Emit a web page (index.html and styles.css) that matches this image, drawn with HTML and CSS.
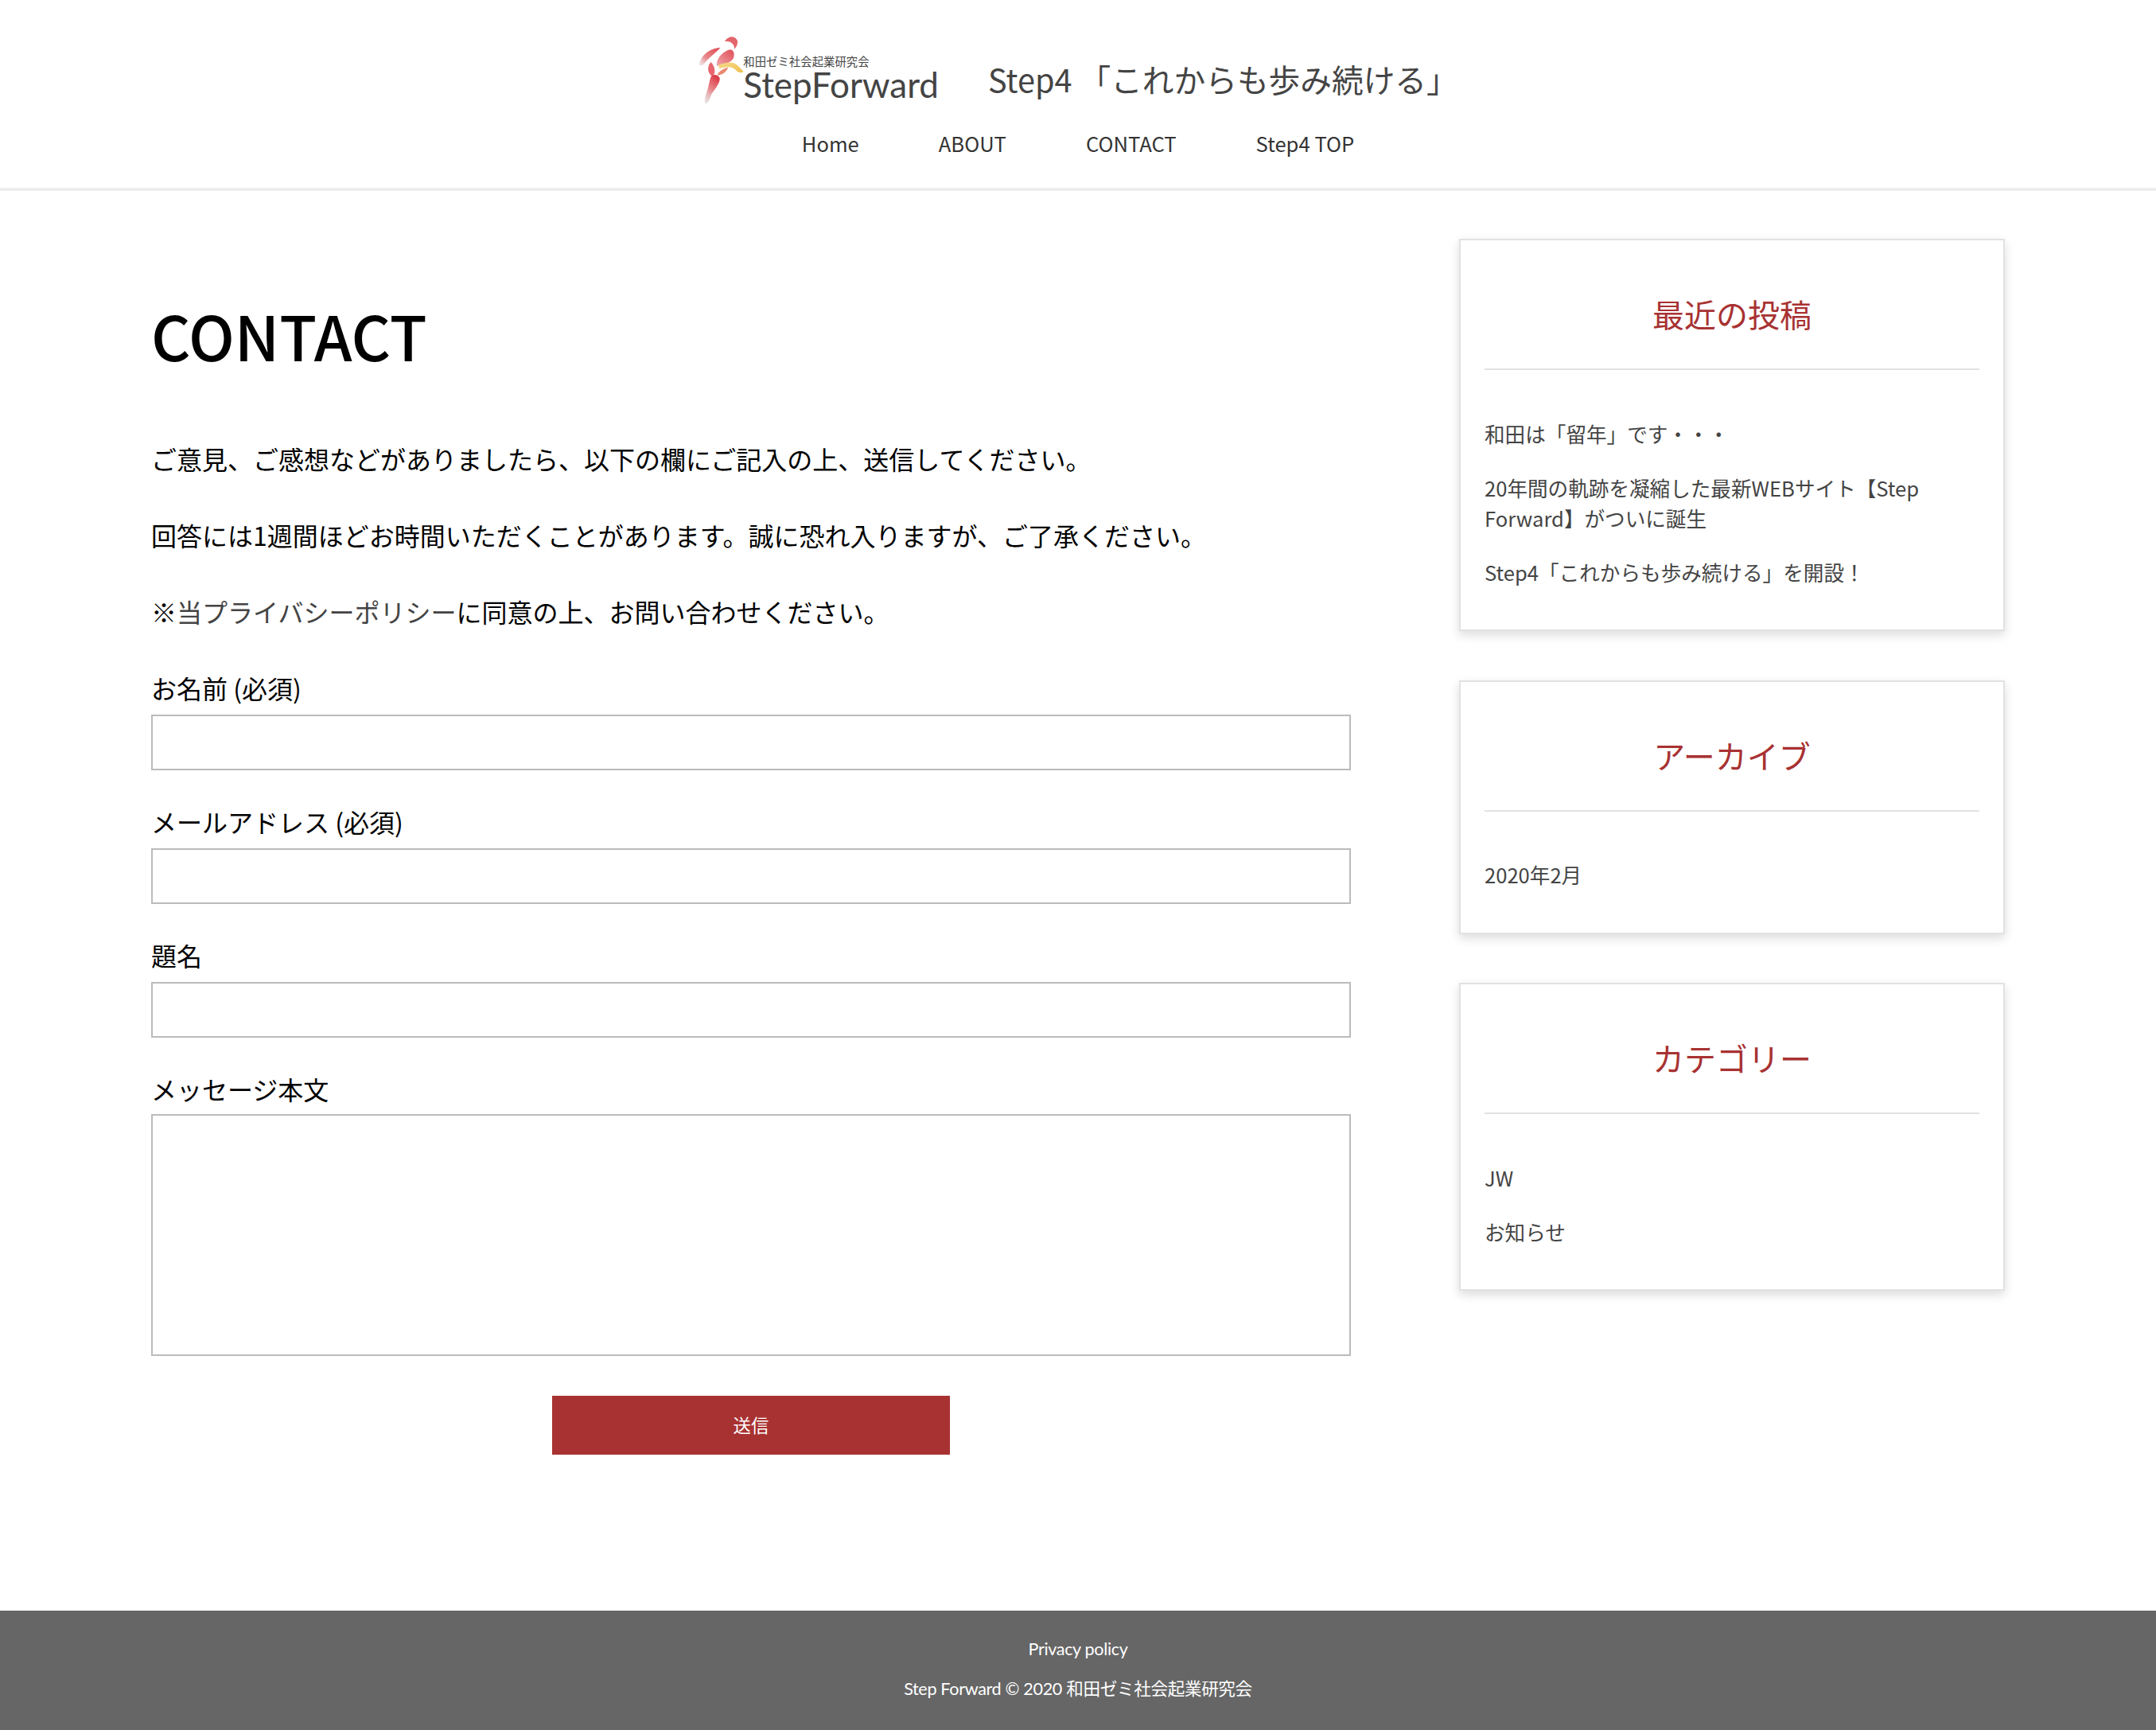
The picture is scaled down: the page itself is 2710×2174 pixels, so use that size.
FILE: index.html
```html
<!DOCTYPE html>
<html lang="ja">
<head>
<meta charset="utf-8">
<title>CONTACT | Step4</title>
<link rel="stylesheet" href="styles.css">
</head>
<body>
<header class="site-header">
  <div class="brand-row">
    <a class="logo" href="#">
      <svg class="logo-mark" viewBox="50 40 180 270" aria-hidden="true">
        <defs>
          <linearGradient id="armGrad" x1="0.9" y1="0" x2="0" y2="1"><stop offset="0" stop-color="#dc4a52"/><stop offset=".6" stop-color="#e98b8f"/><stop offset="1" stop-color="#e0d8d8" stop-opacity=".5"/></linearGradient>
          <linearGradient id="legGrad" x1="0.6" y1="0" x2="0.2" y2="1"><stop offset="0" stop-color="#dc3c46"/><stop offset=".5" stop-color="#e88a8e"/><stop offset="1" stop-color="#d8d0d0" stop-opacity=".6"/></linearGradient>
          <linearGradient id="headGrad" x1="1" y1="0" x2="0" y2="1"><stop offset="0" stop-color="#e04c56"/><stop offset="1" stop-color="#f0a8ac"/></linearGradient>
          <linearGradient id="armBand" x1="0" y1="0" x2="1" y2="1"><stop offset="0" stop-color="#f6d98a"/><stop offset="1" stop-color="#f0c050"/></linearGradient>
          <filter id="soft"><feGaussianBlur stdDeviation="1.6"/></filter>
        </defs>
        <g filter="url(#soft)">
          <path d="M152 68C160 48 190 40 200 65 202 78 195 90 188 96 190 80 175 62 152 68z" fill="#e2656c"/>
          <path d="M55 155C62 125 85 95 135 90 125 105 95 125 75 150 68 158 60 162 55 155z" fill="url(#armGrad)"/>
          <path d="M122 160C118 140 135 110 170 98 185 98 190 112 185 130 175 148 150 155 122 160z" fill="url(#headGrad)"/>
          <path d="M100 145C85 160 85 185 105 200 118 190 118 165 100 145z" fill="#e9666e"/>
          <path d="M130 155C150 148 170 142 190 150 205 160 215 172 222 180 218 190 200 184 190 172 180 162 160 160 130 170z" fill="url(#armBand)"/>
          <path d="M125 190C135 175 150 168 165 165 158 182 145 192 125 195z" fill="#e98a72"/>
          <path d="M100 200C108 190 125 190 133 205 135 225 115 245 100 270 95 285 90 300 80 302 72 298 78 275 85 255 92 235 94 215 100 200z" fill="url(#legGrad)"/>
        </g>
      </svg>
      <span class="logo-text">
        <span class="logo-sub">和田ゼミ社会起業研究会</span>
        <span class="logo-name">StepForward</span>
      </span>
    </a>
    <p class="site-title">Step4 「これからも歩み続ける」</p>
  </div>
  <nav class="main-nav">
    <a href="#">Home</a>
    <a href="#">ABOUT</a>
    <a href="#">CONTACT</a>
    <a href="#">Step4 TOP</a>
  </nav>
</header>

<main class="layout">
  <section class="content">
    <h1 class="page-title">CONTACT</h1>
    <p class="lead">ご意見、ご感想などがありましたら、以下の欄にご記入の上、送信してください。</p>
    <p class="lead">回答には1週間ほどお時間いただくことがあります。誠に恐れ入りますが、ご了承ください。</p>
    <p class="lead">※<a class="inline-link" href="#">当プライバシーポリシー</a>に同意の上、お問い合わせください。</p>
    <form class="contact-form">
      <label class="field">お名前 (必須)<input class="control" type="text"></label>
      <label class="field">メールアドレス (必須)<input class="control" type="email"></label>
      <label class="field">題名<input class="control" type="text"></label>
      <label class="field">メッセージ本文<textarea class="control control-area"></textarea></label>
      <button class="submit" type="button">送信</button>
    </form>
  </section>

  <aside class="sidebar">
    <div class="card">
      <h2 class="card-title">最近の投稿</h2>
      <ul class="card-list">
        <li><a href="#">和田は「留年」です・・・</a></li>
        <li><a href="#">20年間の軌跡を凝縮した最新WEBサイト【Step Forward】がついに誕生</a></li>
        <li><a href="#">Step4「これからも歩み続ける」を開設！</a></li>
      </ul>
    </div>
    <div class="card">
      <h2 class="card-title">アーカイブ</h2>
      <ul class="card-list">
        <li><a href="#">2020年2月</a></li>
      </ul>
    </div>
    <div class="card">
      <h2 class="card-title">カテゴリー</h2>
      <ul class="card-list">
        <li><a href="#">JW</a></li>
        <li><a href="#">お知らせ</a></li>
      </ul>
    </div>
  </aside>
</main>

<footer class="site-footer">
  <a href="#">Privacy policy</a>
  <p>Step Forward © 2020 和田ゼミ社会起業研究会</p>
</footer>
</body>
</html>
```

FILE: styles.css
```css
* { box-sizing: border-box; }
html, body { margin: 0; padding: 0; }
body {
  font-family: "Noto Sans CJK JP", sans-serif;
  color: #000;
  background: #fff;
  min-height: 2174px;
  display: flex;
  flex-direction: column;
}
a { color: inherit; text-decoration: none; }

.site-header {
  height: 240px;
  border-bottom: 4px solid #eee;
  display: flex;
  flex-direction: column;
  align-items: center;
  padding-top: 40px;
}
.brand-row { display: flex; align-items: flex-start; height: 96px; }
.logo { display: flex; align-items: flex-start; color: #444; height: 96px; font-family: Lato, "Noto Sans CJK JP", sans-serif; }
.logo-mark { width: 60px; height: 90px; margin-top: 3px; }
.logo-text { display: flex; flex-direction: column; padding-top: 28px; margin-left: -3px; }
.logo-sub { font-size: 14.4px; line-height: 20px; }
.logo-name { font-size: 44px; line-height: 37px; }
.site-title { margin: 31px 0 0 62px; font-size: 39.7px; line-height: 56px; color: #444; }

.main-nav { display: flex; gap: 100px; margin-top: 24px; font-size: 25.6px; line-height: 40px; color: #333; }

.layout { flex: 1; display: flex; justify-content: space-between; padding: 0 190px; }
.content { width: 1508px; padding-top: 123px; }
.page-title { margin: 0 0 73px; font-size: 76.8px; line-height: 116px; font-weight: 500; }
.lead { margin: 0 0 48px; font-size: 32px; line-height: 48px; }
.inline-link { color: #444; }

.contact-form { display: flex; flex-direction: column; }
.field { display: block; font-size: 32px; line-height: 48px; margin-bottom: 40px; }
.control {
  display: block;
  width: 100%;
  height: 70px;
  margin-top: 10px;
  border: 2px solid #bbb;
  background: #fff;
  padding: 0 16px;
  font: inherit;
}
.control-area { height: 304px; resize: none; margin-top: 8px; }
.submit {
  align-self: center;
  width: 500px;
  height: 74px;
  margin-top: 10px;
  padding: 0 0 2px;
  border: 0;
  background: #a83232;
  color: #fff;
  font: 22.4px/1 "Noto Sans CJK JP", sans-serif;
}

.sidebar { width: 686px; padding-top: 60px; display: flex; flex-direction: column; gap: 61.7px; color: #444; }
.card {
  border: 2px solid #e2e2e2;
  box-shadow: 0 5px 12px rgba(0, 0, 0, .14);
  padding: 0 30px;
  background: #fff;
}
.card-title {
  margin: 0;
  height: 163px;
  padding-top: 62px;
  font-size: 40px;
  line-height: 60px;
  font-weight: 400;
  text-align: center;
  color: #a83232;
  border-bottom: 2px solid #e2e2e2;
}
.card-list { list-style: none; margin: 0; padding: 60.5px 0 23.5px; font-size: 25.6px; line-height: 38px; }
.card-list li { margin-bottom: 30px; }

.site-footer {
  height: 150px;
  background: #666;
  color: #fff;
  text-align: center;
  font-family: Lato, "Noto Sans CJK JP", sans-serif;
  font-size: 21.6px;
  line-height: 32px;
  letter-spacing: -0.35px;
  padding-top: 32px;
}
.site-footer p { margin: 18px 0 0; }
```
